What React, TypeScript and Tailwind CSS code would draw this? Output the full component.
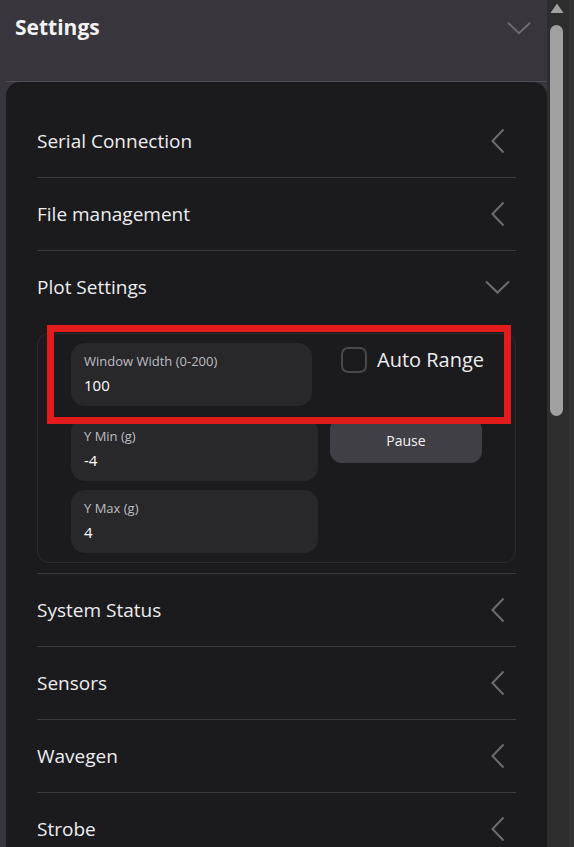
import React from 'react';

const ChevronLeft = () => (
  <svg width="14" height="26" viewBox="0 0 14 26" fill="none">
    <polyline points="12.5,1.5 1.5,13 12.5,24.5" stroke="#6c6c71" strokeWidth="2" />
  </svg>
);

const ChevronDown = ({ w = 25 }: { w?: number }) => (
  <svg width={w} height="14" viewBox="0 0 25 14" fill="none">
    <polyline points="1,1.5 12.5,12.5 24,1.5" stroke="#6c6c71" strokeWidth="2" />
  </svg>
);

function Row({ title }: { title: string }) {
  return (
    <div className="h-[73px] flex items-center justify-between border-b border-[#3a3a3d] pr-[11px]">
      <span className="text-[19px] text-[#ededf0]">{title}</span>
      <ChevronLeft />
    </div>
  );
}

function Field({ label, value, w }: { label: string; value: string; w: string }) {
  return (
    <div className={`${w} h-[63px] rounded-[14px] bg-[#28282b] pl-[13px] pt-[10px]`}>
      <div className="text-[13px] leading-[16px] text-[#bdbdc2]">{label}</div>
      <div className="mt-[7px] text-[15px] leading-[18px] text-white">{value}</div>
    </div>
  );
}

export default function App() {
  return (
    <div className="relative w-[574px] h-[847px] overflow-hidden flex bg-[#38363c]" style={{ fontFamily: '"Open Sans", "Noto Sans", sans-serif' }}>
      <div className="w-[547px] flex flex-col">
        {/* header */}
        <div className="h-[81px] shrink-0 flex items-center justify-between pl-[15px] pr-[16px] pb-[26px]">
          <h1 className="text-[21px] font-bold text-[#f2f2f4]">Settings</h1>
          <ChevronDown w={24} />
        </div>
        <div className="shrink-0 ml-[6px] border-t border-[#4f4e54]">
          <div className="rounded-t-[14px] bg-[#1b1b1e] pl-[31px] pr-[31px] pt-[23px] h-[800px]">
            <Row title="Serial Connection" />
            <Row title="File management" />

            {/* plot settings, open */}
            <div className="border-b border-[#3a3a3d] pb-[10px]">
              <div className="h-[72px] flex items-center justify-between pr-[6px]">
                <span className="text-[19px] text-[#ededf0]">Plot Settings</span>
                <ChevronDown />
              </div>
              <div className="mt-[10px] rounded-[12px] border border-[#2b2b2e] pl-[33px] pt-[9px] pb-[9px] flex">
                <div className="w-[247px] flex flex-col">
                  <Field label="Window Width (0-200)" value="100" w="w-[241px]" />
                  <div className="mt-[12px]">
                    <Field label="Y Min (g)" value="-4" w="w-[247px]" />
                  </div>
                  <div className="mt-[9px]">
                    <Field label="Y Max (g)" value="4" w="w-[247px]" />
                  </div>
                </div>
                <div className="ml-[12px] flex flex-col">
                  <div className="h-[34px] flex items-center pl-[11px] gap-[10px]">
                    <div className="w-[26px] h-[26px] rounded-[7px] border-2 border-[#48484d]" />
                    <span className="text-[20px] text-[#ededf0]">Auto Range</span>
                  </div>
                  <button className="mt-[41px] w-[152px] h-[45px] rounded-[12px] bg-[#3f3f45] text-[14px] text-[#f2f2f4]">
                    Pause
                  </button>
                </div>
              </div>
            </div>

            <Row title="System Status" />
            <Row title="Sensors" />
            <Row title="Wavegen" />
            <Row title="Strobe" />
          </div>
        </div>
      </div>

      {/* scrollbar */}
      <div className="w-[22px] bg-[#2d2d2e] flex flex-col items-center">
        <svg width="14" height="11" viewBox="0 0 14 11" className="mt-[3px] ml-[-3px]">
          <polygon points="7,0.5 13.5,10 0.5,10" fill="#a0a0a0" />
        </svg>
        <div className="mt-[11px] ml-[-3px] w-[13px] h-[391px] rounded-full bg-[#a0a0a0]" />
      </div>
      <div className="w-[5px] bg-[#333335]" />

      {/* annotation */}
      <div className="absolute left-[47px] top-[325px] w-[464px] h-[99px] border-[7px] border-[#e21c1c]" />
    </div>
  );
}
